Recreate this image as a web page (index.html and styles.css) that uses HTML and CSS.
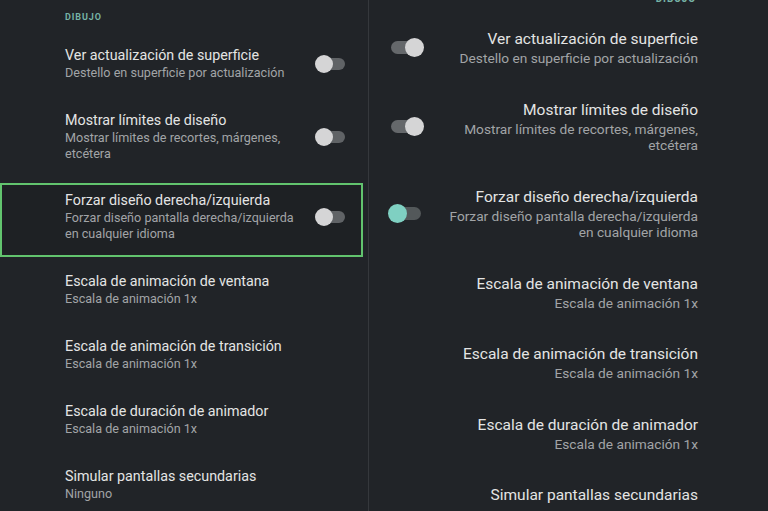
FILE: index.html
```html
<!DOCTYPE html>
<html lang="es">
<head>
<meta charset="utf-8">
<title>Opciones de desarrollador</title>
<link rel="stylesheet" href="styles.css">
</head>
<body>
<div class="screen">
  <section class="panel left">
    <div class="head">DIBUJO</div>
    <div class="item">
      <div class="text">
        <div class="title">Ver actualización de superficie</div>
        <div class="sub">Destello en superficie por actualización</div>
      </div>
      <div class="sw off"><div class="track"><div class="thumb"></div></div></div>
    </div>
    <div class="item">
      <div class="text">
        <div class="title">Mostrar límites de diseño</div>
        <div class="sub">Mostrar límites de recortes, márgenes, etcétera</div>
      </div>
      <div class="sw off"><div class="track"><div class="thumb"></div></div></div>
    </div>
    <div class="item highlight">
      <div class="text">
        <div class="title">Forzar diseño derecha/izquierda</div>
        <div class="sub">Forzar diseño pantalla derecha/izquierda en cualquier idioma</div>
      </div>
      <div class="sw off"><div class="track"><div class="thumb"></div></div></div>
    </div>
    <div class="item">
      <div class="text">
        <div class="title">Escala de animación de ventana</div>
        <div class="sub">Escala de animación 1x</div>
      </div>
    </div>
    <div class="item">
      <div class="text">
        <div class="title">Escala de animación de transición</div>
        <div class="sub">Escala de animación 1x</div>
      </div>
    </div>
    <div class="item">
      <div class="text">
        <div class="title">Escala de duración de animador</div>
        <div class="sub">Escala de animación 1x</div>
      </div>
    </div>
    <div class="item">
      <div class="text">
        <div class="title">Simular pantallas secundarias</div>
        <div class="sub">Ninguno</div>
      </div>
    </div>
  </section>
  <section class="panel right">
    <div class="head">DIBUJO</div>
    <div class="item">
      <div class="text">
        <div class="title">Ver actualización de superficie</div>
        <div class="sub">Destello en superficie por actualización</div>
      </div>
      <div class="sw off"><div class="track"><div class="thumb"></div></div></div>
    </div>
    <div class="item">
      <div class="text">
        <div class="title">Mostrar límites de diseño</div>
        <div class="sub">Mostrar límites de recortes, márgenes, etcétera</div>
      </div>
      <div class="sw off"><div class="track"><div class="thumb"></div></div></div>
    </div>
    <div class="item">
      <div class="text">
        <div class="title">Forzar diseño derecha/izquierda</div>
        <div class="sub">Forzar diseño pantalla derecha/izquierda en cualquier idioma</div>
      </div>
      <div class="sw on"><div class="track"><div class="thumb"></div></div></div>
    </div>
    <div class="item">
      <div class="text">
        <div class="title">Escala de animación de ventana</div>
        <div class="sub">Escala de animación 1x</div>
      </div>
      <div class="sw none"></div>
    </div>
    <div class="item">
      <div class="text">
        <div class="title">Escala de animación de transición</div>
        <div class="sub">Escala de animación 1x</div>
      </div>
      <div class="sw none"></div>
    </div>
    <div class="item">
      <div class="text">
        <div class="title">Escala de duración de animador</div>
        <div class="sub">Escala de animación 1x</div>
      </div>
      <div class="sw none"></div>
    </div>
    <div class="item">
      <div class="text">
        <div class="title">Simular pantallas secundarias</div>
      </div>
      <div class="sw none"></div>
    </div>
  </section>
</div>
</body>
</html>
```
FILE: styles.css
```css
html, body {
  margin: 0;
  padding: 0;
  background: #212428;
}
body {
  width: 768px;
  height: 511px;
  overflow: hidden;
  font-family: Roboto, "Noto Sans", sans-serif;
}
.screen {
  display: flex;
  width: 768px;
  height: 511px;
  overflow: hidden;
  background: #212428;
}
.panel {
  display: flex;
  flex-direction: column;
  overflow: hidden;
}
.left {
  width: 368px;
  flex: none;
  border-right: 1px solid #35383c;
}
.right {
  flex: 1;
}
.head {
  color: #76b3a6;
  font-weight: 700;
  letter-spacing: 0.9px;
  flex: none;
}
.left .head {
  font-size: 9px;
  line-height: 12px;
  padding: 11px 0 8px 65px;
}
.right .head {
  font-size: 10px;
  line-height: 12px;
  margin-top: -7px;
  padding: 0 72px 8px 0;
  text-align: right;
}
.item {
  display: flex;
  align-items: center;
  flex: none;
}
.left .item {
  padding: 15px 23px 15px 65px;
  gap: 10px;
}
.left .item.highlight {
  margin: 6px 5px 0 0;
  border: 2px solid #62c46e;
  padding: 6px 16px 13px 63px;
  background: #1e2124;
}
.right .item {
  flex-direction: row-reverse;
  padding: 16px 70px 17px 19px;
  gap: 12px;
}
.text {
  flex: 1;
  min-width: 0;
}
.title {
  color: #e4e4e4;
}
.sub {
  color: #a2a4a7;
  margin-top: 1px;
}
.left .title {
  font-size: 14.3px;
  line-height: 18px;
}
.left .sub {
  font-size: 12.6px;
  line-height: 16px;
}
.right .text {
  text-align: right;
}
.right .title {
  font-size: 15.5px;
  line-height: 20px;
}
.right .sub {
  font-size: 13.7px;
  line-height: 16.5px;
}

/* switches */
.sw {
  flex: none;
  display: flex;
  align-items: center;
}
.left .sw {
  width: 30px;
  justify-content: flex-end;
}
.left .track {
  width: 28px;
  height: 12px;
  border-radius: 6px;
  background: #606366;
  display: flex;
  align-items: center;
}
.left .thumb {
  width: 18px;
  height: 18px;
  margin-left: -2px;
  border-radius: 50%;
  background: #d5d5d6;
  flex: none;
}
.right .sw {
  width: 36px;
  justify-content: center;
}
.right .track {
  width: 30px;
  height: 13px;
  border-radius: 6.5px;
  background: #65686b;
  display: flex;
  align-items: center;
}
.right .thumb {
  width: 19px;
  height: 19px;
  border-radius: 50%;
  background: #d5d5d6;
  flex: none;
}
.right .off .track {
  justify-content: flex-end;
}
.right .off .thumb {
  margin-right: -3px;
}
.right .on .track {
  background: #53585a;
}
.right .on .thumb {
  margin-left: -3px;
  background: #7fd0c2;
}
```
